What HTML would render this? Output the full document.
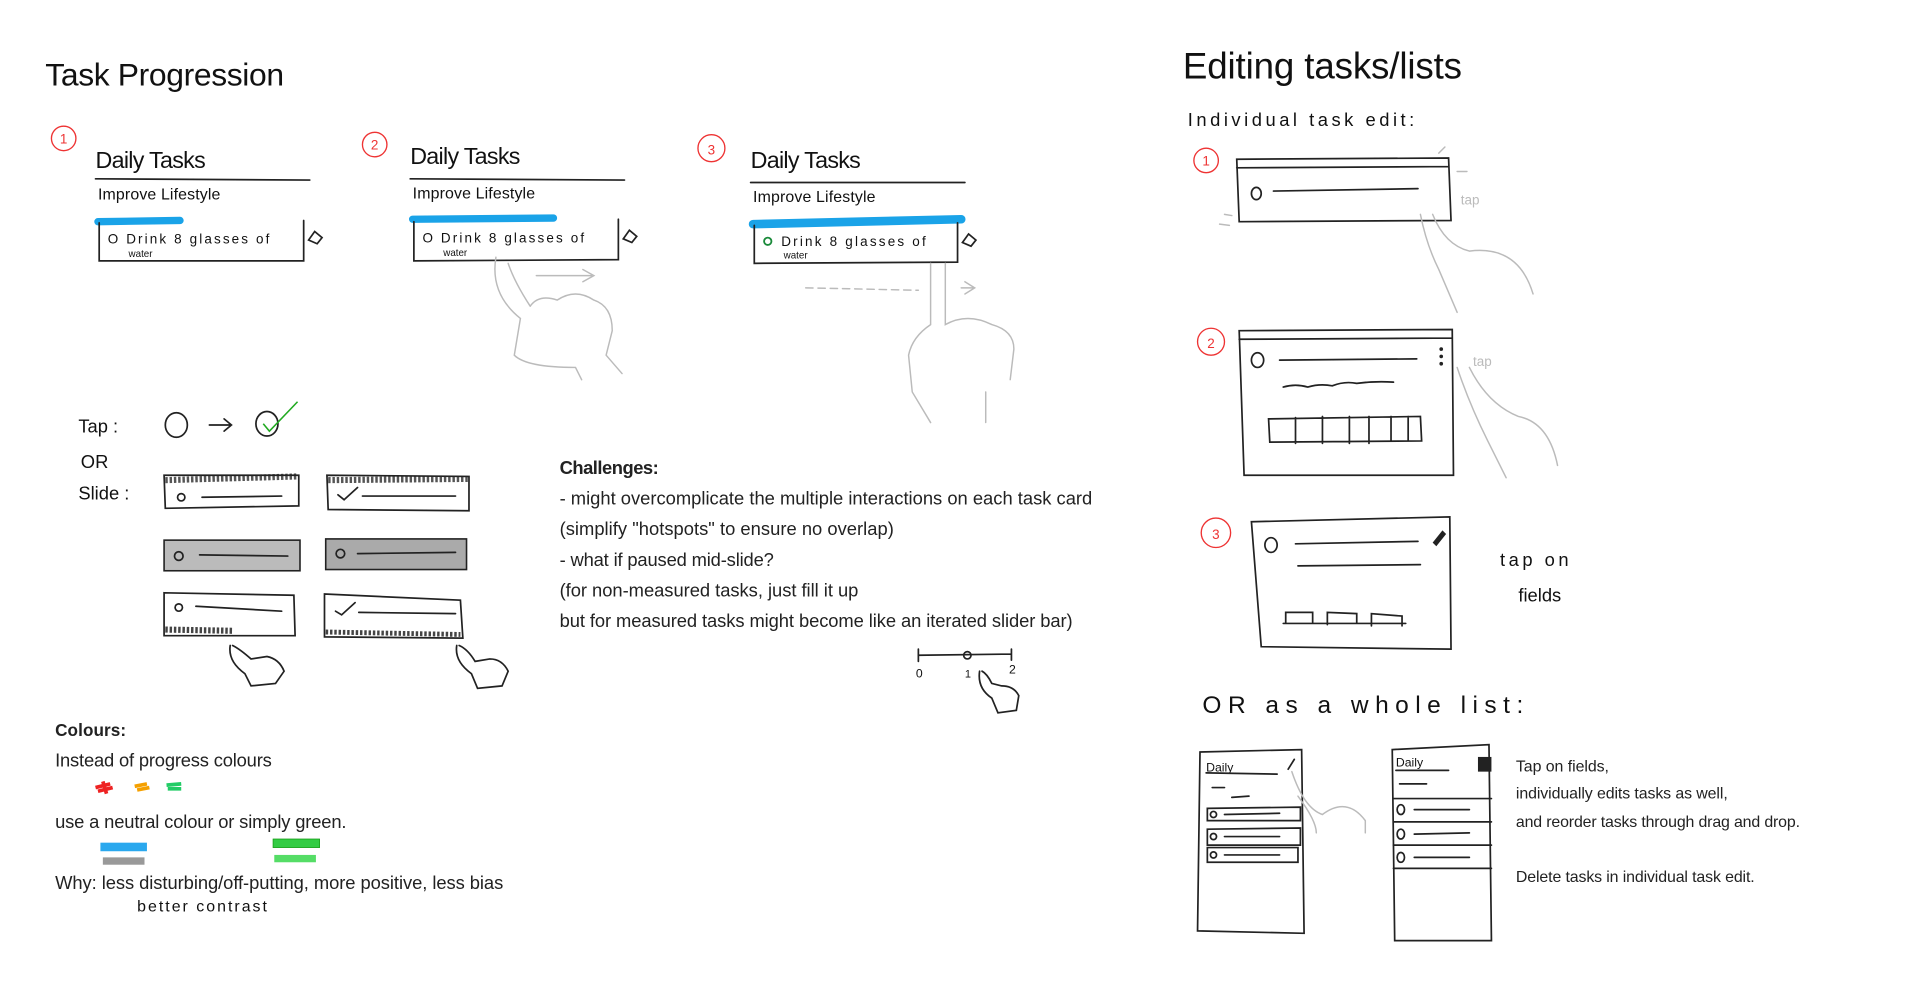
<!DOCTYPE html>
<html><head><meta charset="utf-8"><style>
html,body{margin:0;padding:0;background:#fff;width:1920px;height:997px;overflow:hidden}
svg{display:block}
.t{font-family:"Liberation Sans",sans-serif;fill:#222}
.h{font-family:"Liberation Sans",sans-serif;fill:#111;font-weight:300}
.s{stroke:#222;stroke-width:1.4;fill:none;stroke-linecap:round}
.g{stroke:#bbb;stroke-width:1.2;fill:none;stroke-linecap:round}
.r{stroke:#e33;stroke-width:1.1;fill:none}
.rn{font-family:"Liberation Sans",sans-serif;fill:#e33;font-size:11px;text-anchor:middle}
</style></head><body>
<svg width="1920" height="997" viewBox="0 0 1568 814" preserveAspectRatio="none">
<!-- Titles -->
<text class="h" x="37" y="70" font-size="26" textLength="195">Task Progression</text>
<!-- numbers -->
<circle class="r" cx="52" cy="113" r="10"/><text class="rn" x="52" y="117">1</text>
<circle class="r" cx="306" cy="118" r="10"/><text class="rn" x="306" y="122">2</text>
<circle class="r" cx="581" cy="121" r="11"/><text class="rn" x="581" y="126" font-size="14">3</text>

<!-- card 1 -->
<text class="h" x="78" y="137" font-size="19" textLength="90">Daily Tasks</text>
<path class="s" d="M78 146 L253 147"/>
<text class="h" x="80" y="163" font-size="13" textLength="100">Improve Lifestyle</text>
<path d="M80 181 L147 180" stroke="#1aa3e8" stroke-width="6" stroke-linecap="round"/>
<path class="s" d="M81 182 L81 213 L248 213 L248 180"/>
<text class="h" x="88" y="199" font-size="11" textLength="132">O Drink 8 glasses of</text>
<text class="h" x="105" y="210" font-size="8">water</text>
<path class="s" d="M252 196 l5 -7 l6 5 l-4 5 z"/>

<!-- card 2 -->
<text class="h" x="335" y="134" font-size="19" textLength="90">Daily Tasks</text>
<path class="s" d="M335 146 L510 147"/>
<text class="h" x="337" y="162" font-size="13" textLength="100">Improve Lifestyle</text>
<path d="M337 179 L452 178" stroke="#1aa3e8" stroke-width="6" stroke-linecap="round"/>
<path class="s" d="M338 181 L338 213 L505 212 L505 179"/>
<text class="h" x="345" y="198" font-size="11" textLength="132">O Drink 8 glasses of</text>
<text class="h" x="362" y="209" font-size="8">water</text>
<path class="s" d="M509 195 l5 -7 l6 5 l-4 5 z"/>
<path class="g" d="M438 225 L483 225 M476 220 L485 225 L476 230"/>
<path class="g" d="M405 210 Q400 240 425 260 L420 290 Q430 300 470 300 L475 310 M415 215 Q420 230 433 250 M433 250 Q440 240 455 245 Q470 235 485 245 Q500 250 500 270 L495 290 M495 290 L508 305"/>

<!-- card 3 -->
<text class="h" x="613" y="137" font-size="19" textLength="90">Daily Tasks</text>
<path class="s" d="M613 149 L788 149"/>
<text class="h" x="615" y="165" font-size="13" textLength="100">Improve Lifestyle</text>
<path d="M615 183 L785 179" stroke="#1aa3e8" stroke-width="7" stroke-linecap="round"/>
<path class="s" d="M616 184 L616 215 L782 214 L782 182"/>
<circle cx="627" cy="197" r="3" fill="none" stroke="#1a8a3a" stroke-width="1.5"/>
<text class="h" x="638" y="201" font-size="11" textLength="118">Drink 8 glasses of</text>
<text class="h" x="640" y="211" font-size="8">water</text>
<path class="s" d="M786 198 l5 -7 l6 5 l-4 5 z"/>
<path class="g" d="M658 235 L750 237" stroke-dasharray="6 4"/>
<path class="g" d="M785 235 L795 235 M788 230 L796 235 L788 240"/>
<path class="g" d="M760 215 L760 265 Q745 275 742 290 L745 320 L760 345 M772 215 L772 265 Q790 255 810 265 Q828 270 828 285 L825 310 M805 320 L805 345"/>

<!-- Tap / OR / Slide -->
<text class="h" x="64" y="353" font-size="15">Tap  :</text>
<ellipse class="s" cx="144" cy="347" rx="9" ry="10"/>
<path class="s" d="M171 347 L189 347 M183 342 L189 347 L183 352"/>
<ellipse class="s" cx="218" cy="346" rx="9" ry="10"/>
<path d="M215 346 L220 352 L243 328" stroke="#2a2" stroke-width="1.3" fill="none"/>
<text class="h" x="66" y="382" font-size="15">OR</text>
<text class="h" x="64" y="408" font-size="15">Slide :</text>

<!-- slide boxes left -->
<path d="M135 392 L243 389" stroke="#555" stroke-width="5" stroke-dasharray="2 1.5"/>
<path class="s" d="M134 388 L244 388 L244 413 L135 415 Z"/>
<circle class="s" cx="148" cy="406" r="3"/><path class="s" d="M165 406 L230 405"/>
<rect x="134" y="441" width="111" height="25" fill="#bbb" stroke="#222" stroke-width="1.3"/>
<circle class="s" cx="146" cy="454" r="3.5"/><path class="s" d="M163 453 L235 454"/>
<path class="s" d="M134 484 L240 486 L241 519 L134 519 Z"/>
<path d="M135 514 L190 515" stroke="#444" stroke-width="5" stroke-dasharray="2 1.5"/>
<circle class="s" cx="146" cy="496" r="3"/><path class="s" d="M160 495 L230 499"/>
<!-- right -->
<path d="M268 392 L383 391" stroke="#555" stroke-width="5" stroke-dasharray="2 1.5"/>
<path class="s" d="M267 388 L383 389 L383 417 L268 416 Z"/>
<path class="s" d="M276 404 L281 408 L292 398"/><path class="s" d="M296 405 L372 405"/>
<rect x="266" y="440" width="115" height="25" fill="#aaa" stroke="#222" stroke-width="1.3"/>
<circle class="s" cx="278" cy="452" r="3.5"/><path class="s" d="M292 452 L372 451"/>
<path class="s" d="M265 485 L376 490 L378 521 L265 520 Z"/>
<path d="M266 516 L376 518" stroke="#444" stroke-width="4" stroke-dasharray="2 1.5"/>
<path class="s" d="M274 499 L279 502 L290 492"/><path class="s" d="M293 500 L372 501"/>
<!-- hands -->
<path class="s" d="M188 527 Q186 540 200 550 L205 560 L225 558 L232 548 Q228 538 218 536 L205 538 Q196 530 190 527"/>
<path class="s" d="M373 527 Q371 540 385 550 L390 562 L410 560 L415 548 Q410 538 400 538 L388 540 Q382 530 375 527"/>

<!-- Challenges -->
<text class="t" x="457" y="387" font-size="15" font-weight="bold" textLength="81">Challenges:</text>
<text class="t" x="457" y="412" font-size="15" textLength="435">- might overcomplicate the multiple interactions on each task card</text>
<text class="t" x="457" y="437" font-size="15" textLength="273">(simplify "hotspots" to ensure no overlap)</text>
<text class="t" x="457" y="462" font-size="15" textLength="175">- what if paused mid-slide?</text>
<text class="t" x="457" y="487" font-size="15" textLength="244">(for non-measured tasks, just fill it up</text>
<text class="t" x="457" y="512" font-size="15" textLength="419">but for measured tasks might become like an iterated slider bar)</text>
<!-- slider -->
<path class="s" d="M750 535 L826 534 M750 530 L750 540 M826 530 L826 539"/>
<circle class="s" cx="790" cy="535" r="3"/>
<text class="h" x="748" y="553" font-size="10">0</text><text class="h" x="788" y="553" font-size="9">1</text><text class="h" x="824" y="550" font-size="10">2</text>
<path class="s" d="M800 548 Q798 562 810 570 L815 582 L830 580 L832 568 Q828 560 818 560 L810 558 Q806 550 802 548"/>

<!-- Colours -->
<text class="t" x="45" y="601" font-size="14" font-weight="bold" textLength="58">Colours:</text>
<text class="t" x="45" y="626" font-size="15" textLength="177">Instead of progress colours</text>
<path d="M78 643 L90 640 M80 646 L92 643 M84 638 L87 648" stroke="#e22" stroke-width="3"/>
<path d="M110 642 L120 640 M112 645 L122 643" stroke="#f5a000" stroke-width="3"/>
<path d="M136 641 L148 640 M137 644 L148 644" stroke="#2c6" stroke-width="3"/>
<text class="t" x="45" y="676" font-size="15" textLength="238">use a neutral colour or simply green.</text>
<rect x="82" y="688" width="38" height="7" fill="#2aa8ee"/>
<rect x="84" y="700" width="34" height="6" fill="#999"/>
<rect x="223" y="685" width="38" height="7" fill="#3c4" stroke="#191" stroke-width=".6"/>
<rect x="224" y="698" width="34" height="6" fill="#5d6"/>
<text class="t" x="45" y="726" font-size="15" textLength="366">Why: less disturbing/off-putting, more positive, less bias</text>
<text class="h" x="112" y="744" font-size="13" textLength="106">better contrast</text>

<!-- Right side -->
<text class="h" x="966" y="64" font-size="30" textLength="228">Editing tasks/lists</text>
<text class="h" x="970" y="103" font-size="15" textLength="185">Individual task edit:</text>

<circle class="r" cx="985" cy="131" r="10"/><text class="rn" x="985" y="135">1</text>
<path class="s" d="M1010 130 L1183 129 L1185 180 L1012 181 Z M1010 137 L1183 136"/>
<ellipse class="s" cx="1026" cy="158" rx="4" ry="5"/>
<path class="s" d="M1040 156 L1158 154"/>
<text x="1193" y="167" font-size="11" fill="#bbb" font-family="Liberation Sans">tap</text>
<path class="g" d="M1160 175 Q1165 200 1175 220 L1190 255 M1170 175 Q1180 200 1200 205 Q1240 200 1252 240 M1175 125 L1180 120 M1190 140 L1198 140 M1000 175 L1006 176 M996 183 L1004 184"/>

<circle class="r" cx="989" cy="279" r="11"/><text class="rn" x="989" y="284" font-size="13">2</text>
<path class="s" d="M1012 270 L1186 269 L1187 388 L1016 388 Z M1012 277 L1186 276"/>
<ellipse class="s" cx="1027" cy="294" rx="5" ry="6"/>
<path class="s" d="M1045 294 L1157 293"/>
<circle cx="1177" cy="285" r="1.5" fill="#222"/><circle cx="1177" cy="291" r="1.5" fill="#222"/><circle cx="1177" cy="297" r="1.5" fill="#222"/>
<text x="1203" y="299" font-size="11" fill="#bbb" font-family="Liberation Sans">tap</text>
<path class="s" d="M1048 316 q10 -3 20 0 q10 -3 20 -1 q10 -4 20 -2 q15 -2 30 -1"/>
<path class="s" d="M1036 342 L1160 340 L1161 360 L1037 361 Z M1058 341 L1058 362 M1080 340 L1080 362 M1102 340 L1102 362 M1118 340 L1118 362 M1136 340 L1136 360 M1150 340 L1150 360"/>
<path class="g" d="M1190 300 Q1200 330 1215 360 L1230 390 M1200 300 Q1215 330 1240 340 Q1265 345 1272 380"/>

<circle class="r" cx="993" cy="435" r="12"/><text class="rn" x="993" y="440" font-size="14">3</text>
<path class="s" d="M1022 426 L1184 422 L1185 530 L1030 528 Z"/>
<ellipse class="s" cx="1038" cy="445" rx="5" ry="6"/>
<path class="s" d="M1058 444 L1158 442"/>
<path d="M1170 443 l8 -10 l3 3 l-8 10 z" fill="#222"/>
<path class="s" d="M1060 462 L1160 461"/>
<path class="s" d="M1050 509 L1050 500 L1072 500 L1072 508 M1084 510 L1084 500 L1108 501 L1108 509 M1120 511 L1120 501 L1145 503 L1145 511 M1048 509 L1148 509"/>
<text class="h" x="1225" y="462" font-size="15" textLength="56">tap  on</text>
<text class="h" x="1240" y="491" font-size="15">fields</text>

<text class="h" x="982" y="582" font-size="20" textLength="262">OR  as  a  whole  list:</text>

<path class="s" d="M980 614 L1063 612 L1065 762 L978 760 Z"/>
<text class="h" x="985" y="630" font-size="10">Daily</text>
<path class="s" d="M985 631 L1043 632 M990 643 L1000 643 M1006 651 L1020 650"/>
<path class="s" d="M1052 628 l5 -8"/>
<path class="s" d="M986 660 L1062 659 L1062 670 L986 670 Z M986 677 L1062 676 L1062 690 L986 690 Z M986 692 L1060 692 L1060 704 L986 704 Z"/>
<circle class="s" cx="991" cy="665" r="2.5"/><circle class="s" cx="991" cy="683" r="2.5"/><circle class="s" cx="991" cy="698" r="2.5"/>
<path class="s" d="M1000 665 L1045 664 M1000 683 L1045 683 M1000 698 L1045 698"/>
<path class="g" d="M1055 630 Q1065 660 1080 665 Q1100 650 1115 670 L1115 680 M1060 650 Q1075 670 1075 680"/>

<path class="s" d="M1137 612 L1216 608 L1218 768 L1139 768 Z"/>
<text class="h" x="1140" y="626" font-size="10">Daily</text>
<path class="s" d="M1140 629 L1183 629 M1143 640 L1165 640"/>
<rect x="1207" y="618" width="11" height="12" fill="#222"/>
<path class="s" d="M1138 652 L1218 652 M1138 671 L1218 671 M1138 690 L1218 690 M1138 709 L1218 709"/>
<ellipse class="s" cx="1144" cy="661" rx="3" ry="4"/><ellipse class="s" cx="1144" cy="681" rx="3" ry="4"/><ellipse class="s" cx="1144" cy="700" rx="3" ry="4"/>
<path class="s" d="M1155 661 L1200 661 M1155 681 L1200 680 M1155 700 L1200 700"/>

<text class="t" x="1238" y="630" font-size="13" textLength="76">Tap on fields,</text>
<text class="t" x="1238" y="652" font-size="13" textLength="173">individually edits tasks as well,</text>
<text class="t" x="1238" y="675" font-size="13" textLength="232">and reorder tasks through drag and drop.</text>
<text class="t" x="1238" y="720" font-size="13" textLength="195">Delete tasks in individual task edit.</text>
</svg>
</body></html>
